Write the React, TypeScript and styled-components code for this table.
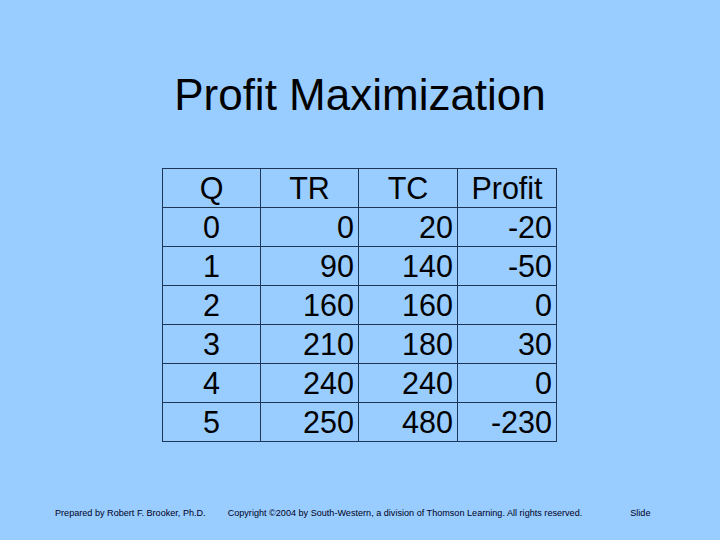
import React from "react";
import styled, {createGlobalStyle} from "styled-components";

const GlobalStyle = createGlobalStyle`
	html, body {
		margin: 0;
		padding: 0;
		background: #99ccff;
	}
`;

const Slide = styled.div`
	width: 720px;
	height: 540px;
	background: #99ccff;
	display: flex;
	flex-direction: column;
	align-items: center;
	font-family: "Liberation Sans", Arial, sans-serif;
	color: #000;
	box-sizing: border-box;
	padding-top: 73px;
`;

const Title = styled.h1`
	margin: 0;
	font-size: 44px;
	font-weight: normal;
	line-height: 43px;
	height: 43px;
	text-align: center;
`;

const Table = styled.table`
	margin-top: 52px;
	margin-left: -1px;
	border-collapse: collapse;
	table-layout: fixed;
	font-size: 30.5px;
	line-height: 1;
`;

const Cell = styled.td<{align?: "center" | "right"; header?: boolean}>`
	border: 1px solid #1e3656;
	height: 39px;
	padding: 0 ${p => (p.align === "right" ? 4 : 0)}px 0 0;
	text-align: ${p => p.align || "right"};
	vertical-align: middle;
	box-sizing: border-box;
`;

const Footer = styled.div`
	margin-top: auto;
	width: 100%;
	display: flex;
	align-items: center;
	padding: 0 0 22px 55px;
	box-sizing: border-box;
	font-size: 9.1px;
	color: #000022;
`;

const FooterText = styled.span<{gap?: number}>`
	margin-left: ${p => p.gap || 0}px;
	white-space: nowrap;
`;

const widths = [98, 98, 99, 99];
const headers = ["Q", "TR", "TC", "Profit"];
const rows = [
	[0, 0, 20, -20],
	[1, 90, 140, -50],
	[2, 160, 160, 0],
	[3, 210, 180, 30],
	[4, 240, 240, 0],
	[5, 250, 480, -230],
];

const App = () => {
	return <>
		<GlobalStyle/>
		<Slide>
			<Title>Profit Maximization</Title>
			<Table>
				<colgroup>
					{widths.map((w, i) => <col key={i} style={{width: w}}/>)}
				</colgroup>
				<tbody>
					<tr>
						{headers.map(h => <Cell key={h} header align="center">{h}</Cell>)}
					</tr>
					{rows.map(r => (
						<tr key={r[0]}>
							{r.map((v, i) => <Cell key={i} align={i === 0 ? "center" : "right"}>{v}</Cell>)}
						</tr>
					))}
				</tbody>
			</Table>
			<Footer>
				<FooterText>Prepared by Robert F. Brooker, Ph.D.</FooterText>
				<FooterText gap={22}>Copyright ©2004 by South-Western, a division of Thomson Learning. All rights reserved.</FooterText>
				<FooterText gap={48}>Slide</FooterText>
			</Footer>
		</Slide>
	</>;
};

export default App;
